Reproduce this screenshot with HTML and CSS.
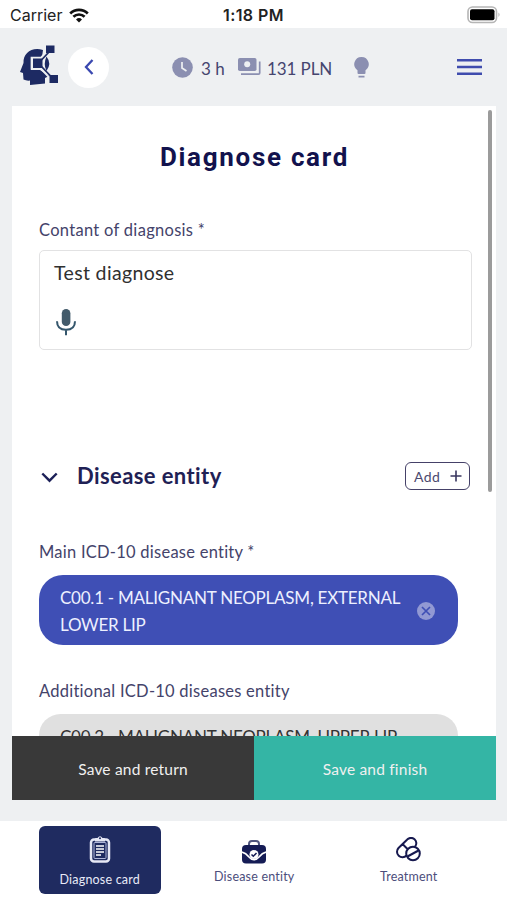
FILE: index.html
```html
<!DOCTYPE html>
<html lang="en">
<head>
<meta charset="utf-8">
<title>Diagnose card</title>
<link rel="stylesheet" href="styles.css">
</head>
<body>
<div class="app">
  <div class="status">
    <div class="carrier"><span>Carrier</span>
      <svg width="20" height="15" viewBox="0 0 20 15" fill="none" stroke="#111" stroke-width="2.7"><path d="M1.2 5.5a12.6 12.6 0 0 1 17.6 0M4.4 8.8a8 8 0 0 1 11.2 0"/><path d="M10 14.5 7 11.5a4.3 4.3 0 0 1 6 0z" fill="#111" stroke="none"/></svg>
    </div>
    <span class="time">1:18 PM</span>
    <svg class="battery" width="34" height="18" viewBox="0 0 34 18"><rect x="1" y="1" width="28.500" height="15.500" rx="4.500" fill="#fff" stroke="#b5b5b5" stroke-width="1.600"/><rect x="3" y="3.200" width="24.500" height="11" rx="2" fill="#000"/><path d="M31.500 6.500q2 2 0 4.500z" fill="#aaa"/></svg>
  </div>
  <header class="topbar">
    <svg class="logo" width="38" height="40" viewBox="0 0 38 40"><path d="M23 5C12 1.500 3 8 3.500 18L0 27l3 1 .5 6.500q3 1.500 6.500 1L10 40l15-1.500V33l4-2-9-6H11V12h11z" fill="#1d2a63"/><path d="m27 6-6 6.500H11.500v11.500H21l9 9.500" fill="none" stroke="#eef0f2" stroke-width="1.700"/><path d="M13 13.500h9.500v9.500H13zM26.500 11.500q5.500 7 0 14.500-3.500-7 0-14.500M26 .5h8.500V8H26zM29.500 30h8.500v8h-8.500z" fill="#1d2a63"/><path d="m29 7-8 8.500M21 21l11 11.500" stroke="#1d2a63" stroke-width="1.800"/></svg>
    <button class="back" aria-label="Back"><svg width="12" height="18" viewBox="0 0 12 18" fill="none" stroke="#3a48b0" stroke-width="2.300"><path d="M9.500 2 3 9l6.500 7"/></svg></button>
    <div class="facts">
      <svg class="clock" width="21" height="21" viewBox="0 0 21 21"><circle cx="10.500" cy="10.500" r="10.300" fill="#8b8fb1"/><path d="M10 5v6l4.500 3" fill="none" stroke="#eef0f2" stroke-width="1.700"/></svg>
      <span class="hours">3 h</span>
      <svg class="money" width="23" height="18" viewBox="0 0 23 18"><rect width="18.500" height="13" rx="1.800" fill="#8b8fb1"/><circle cx="9.200" cy="6.300" r="3" fill="#eef0f2"/><path d="M3 16.200h17.500q1.200 0 1.200-1.200V3.500" fill="none" stroke="#8b8fb1" stroke-width="1.700"/></svg>
      <span class="price">131 PLN</span>
      <svg class="bulb" width="15" height="21" viewBox="0 0 15 21" fill="#8b8fb1"><path d="M7.500 0a7.200 7.200 0 0 0-4 13.200V16q0 1 1 1h6q1 0 1-1v-2.800A7.200 7.200 0 0 0 7.500 0zM4.500 18.700h6v1.800h-6z"/></svg>
    </div>
    <button class="menu" aria-label="Menu"><svg width="25" height="18" viewBox="0 0 25 18" stroke="#3f4cae" stroke-width="2.400"><path d="M0 2.200h25M0 9h25M0 15.800h25"/></svg></button>
  </header>
  <main class="card">
    <div class="scroll">
      <h1>Diagnose card</h1>
      <label class="label content">Contant of diagnosis *</label>
      <div class="field">
        <span>Test diagnose</span>
        <svg width="20" height="27" viewBox="0 0 20 27"><rect x="5.800" y="0" width="8.600" height="17" rx="4.300" fill="#435b6b"/><path d="M1 12.200q0 8.500 9 8.500t9-8.500M10 20v6.300" fill="none" stroke="#34566c" stroke-width="2"/></svg>
      </div>
      <div class="section">
        <svg width="17" height="11" viewBox="0 0 17 11" fill="none" stroke="#1c2058" stroke-width="2.400"><path d="m1.300 1.500 7.200 7.200 7.200-7.200"/></svg>
        <h2>Disease entity</h2>
        <button class="add"><span>Add</span><svg width="12" height="12" viewBox="0 0 12 12" stroke="#38365f" stroke-width="1.600"><path d="M6 .5v11M.5 6h11"/></svg></button>
      </div>
      <label class="label main">Main ICD-10 disease entity *</label>
      <div class="chip">
        <span class="chiptext">C00.1 - MALIGNANT NEOPLASM, EXTERNAL<br>LOWER LIP</span>
        <svg width="18" height="18" viewBox="0 0 18 18"><circle cx="9" cy="9" r="9" fill="#9299d3"/><path d="m5 5 8 8m0-8-8 8" stroke="#3f4fb5" stroke-width="1.700"/></svg>
      </div>
      <label class="label additional">Additional ICD-10 diseases entity</label>
      <div class="chip gray"><span class="chiptext">C00.2 - MALIGNANT NEOPLASM, UPPER LIP</span></div>
    </div>
    <div class="actions"><button class="return"><span>Save and return</span></button><button class="finish"><span>Save and finish</span></button></div>
    <div class="thumb"></div>
  </main>
  <nav class="tabs">
    <a class="tab active"><svg width="22" height="28" viewBox="0 0 22 28" fill="none"><rect x="2" y="4.500" width="18" height="22" rx="3" stroke="#e6e8f5" stroke-width="2.500"/><rect x="5" y="7.500" width="12" height="16" rx="1" stroke="#aeb5d8"/><path d="M6 6.500V4q0-1 1-1h1.500q2.500-3.500 5 0H15q1 0 1 1v2.500z" fill="#e6e8f5"/><path d="M7 11h8M7 14h8M7 17h8M7 20h5" stroke="#fff" stroke-width="1.700"/><circle cx="11" cy="3.300" r="1" fill="#1e2a60"/></svg><span>Diagnose card</span></a>
    <a class="tab"><svg width="24" height="24" viewBox="0 0 24 24"><path d="M7 6V4q0-3 3-3h4q3 0 3 3v2" fill="none" stroke="#4f557e" stroke-width="2"/><rect y="5" width="24" height="18.500" rx="4" fill="#151c55"/><path d="M0 12q4 1 6.500 4.500Q12 23 17.500 16.500 20 13 24 12" fill="none" stroke="#fff" stroke-width="1.700"/><circle cx="12" cy="14.500" r="4.500" fill="#fff"/><path d="m9.500 14.500 1.800 1.800 3.200-3.300" fill="none" stroke="#151c55" stroke-width="1.500"/></svg><span>Disease entity</span></a>
    <a class="tab pills"><svg width="25" height="25" viewBox="0 0 25 25" fill="none" stroke="#17194f" stroke-width="2"><path d="M10.500 18.500A5.300 5.300 0 0 1 2.500 11L11 2.700a5.200 5.200 0 0 1 8 7M6.500 7l5.500 5.500"/><circle cx="17" cy="16.500" r="6.800"/><path d="m11.500 19.500 11-6"/></svg><span>Treatment</span></a>
  </nav>
</div>
</body>
</html>
```
FILE: styles.css
```css
* { box-sizing: border-box; }
body { margin: 0; font-family: Lato, "Open Sans", sans-serif; background: #eef0f2; }
button { font: inherit; border: 0; padding: 0; background: none; }
svg { display: block; flex: none; }
span, h1, h2 { white-space: nowrap; }
.app { width: 507px; height: 900px; display: flex; flex-direction: column; overflow: hidden; }
.status { height: 28px; flex: none; background: #fff; display: grid; grid-template-columns: 213px auto 1fr; align-items: center; padding: 2px 6px 0 10px; font: 16px/26px Inter, sans-serif; color: #222; }
.carrier { display: flex; align-items: center; gap: 7px; }
.time { font-weight: 600; letter-spacing: .4px; }
.battery { justify-self: end; }
.topbar { height: 78px; flex: none; display: flex; align-items: center; padding: 0 25px 0 20px; }
.logo { margin-top: -4px; }
.back { width: 41px; height: 41px; border-radius: 50%; background: #fff; margin-left: 10px; display: flex; align-items: center; justify-content: center; }
.facts { display: flex; align-items: center; margin-left: 63px; font-size: 17px; color: #45456f; }
.hours { width: 30px; margin: 2px 7px 0 8px; }
.price { width: 65px; margin: 2px 22px 0 6px; letter-spacing: -.1px; }
.menu { margin: 0 0 0 auto; }
.card { position: relative; width: 484px; height: 694px; margin-left: 12px; flex: none; background: #fff; display: flex; flex-direction: column; }
.scroll { height: 630px; overflow: hidden; padding: 36px 24px 0 27px; display: flex; flex-direction: column; }
.scroll > * { flex: none; }
h1 { margin: 0 2px 0 0; text-align: center; font: 700 26px/30px Roboto, sans-serif; letter-spacing: 1.700px; color: #12124d; }
.label { display: block; font-size: 16.500px; line-height: 24px; color: #44436a; white-space: nowrap; letter-spacing: .25px; }
.content { margin-top: 46px; letter-spacing: .3px; }
.field { margin-top: 8px; height: 100px; border: 1.500px solid #e2e2e3; border-radius: 5px; padding: 9px 14px; font-size: 19.500px; line-height: 26px; color: #303030; letter-spacing: .35px; }
.field svg { margin: 23px 0 0 2px; }
.section { margin-top: 111px; height: 30px; display: flex; align-items: center; padding-left: 2px; }
.section > svg { margin-top: 2px; }
h2 { margin: 0 0 0 19px; font-size: 22px; line-height: 30px; font-weight: 700; color: #1f2155; letter-spacing: .4px; }
.add { width: 65px; height: 28px; margin: 0 2px 0 auto; border: 1.500px solid #454168; border-radius: 6px; display: flex; align-items: center; justify-content: space-between; padding: 0 7px 0 8px; font-size: 14px; color: #4c4a70; letter-spacing: .4px; }
.main { margin-top: 49px; }
.chip { height: 70px; width: 419px; margin-top: 11px; border-radius: 24px; background: #3f4fb5; color: #edf0ff; display: flex; align-items: center; justify-content: space-between; padding: 2px 23px 0 21px; font-size: 17px; line-height: 27px; letter-spacing: -.24px; }
.additional { margin-top: 34px; }
.gray { background: #e0e0e0; color: #333; height: 43px; }
.actions { height: 64px; display: grid; grid-template-columns: 1fr 1fr; font-size: 15.500px; }
.actions button { color: #f0f0f0; letter-spacing: .2px; padding-top: 1px; }
.actions .return { background: #393939; }
.actions .finish { background: #34b5a5; }
.thumb { position: absolute; left: 476px; top: 4px; width: 4px; height: 382px; border-radius: 2px; background: #9b9b9b; }
.tabs { height: 79px; margin-top: auto; background: #fff; display: flex; padding: 5px 0 0 39px; gap: 33px; }
.tab { width: 121.500px; height: 68px; border-radius: 6px; display: flex; flex-direction: column; align-items: center; justify-content: flex-end; gap: 5px; padding-bottom: 9px; font-size: 12.500px; line-height: 16px; color: #4c4e7c; letter-spacing: .2px; }
.active { background: #1f2b60; color: #e8eaf8; padding-bottom: 6px; gap: 9px; }
.pills { gap: 7px; }
```
